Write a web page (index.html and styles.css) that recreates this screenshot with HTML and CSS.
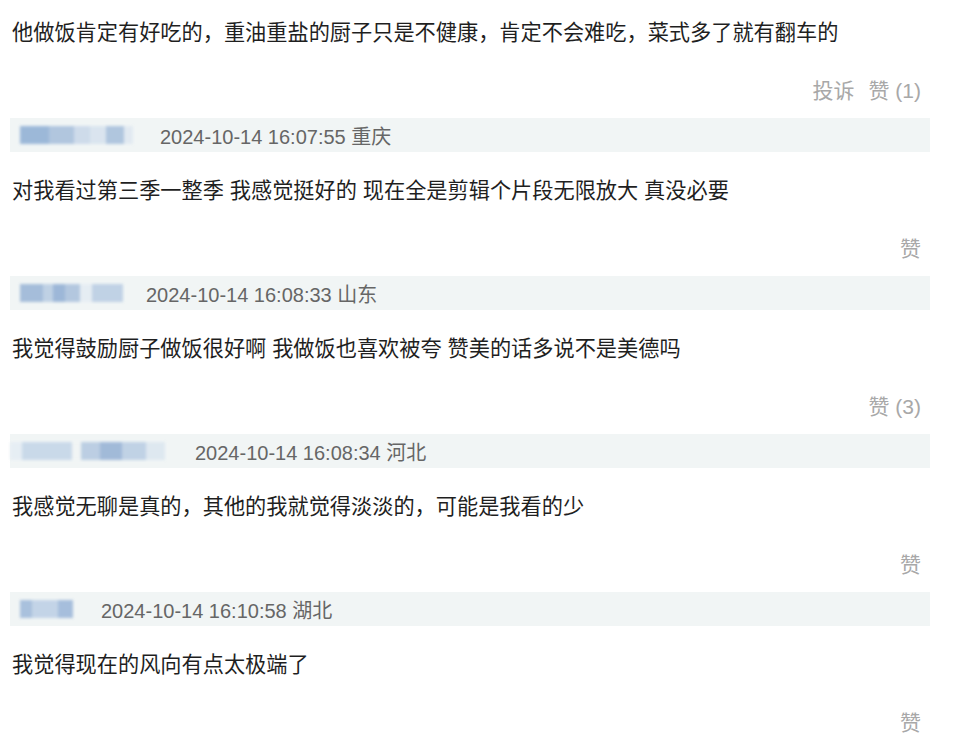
FILE: index.html
```html
<!DOCTYPE html>
<html lang="zh-CN">
<head>
  <meta charset="UTF-8">
  <meta name="viewport" content="width=device-width, initial-scale=1.0">
  <title>评论</title>
  <link rel="stylesheet" href="styles.css">
</head>
<body>
  <div class="comments">
    <div class="comment">
      <p class="text">他做饭肯定有好吃的，重油重盐的厨子只是不健康，肯定不会难吃，菜式多了就有翻车的</p>
      <div class="actions"><span class="report">投诉</span><span>赞 (1)</span></div>
    </div>

    <div class="comment">
      <div class="meta">
        <span class="name name-1"></span>
        <span class="time">2024-10-14 16:07:55 重庆</span>
      </div>
      <p class="text">对我看过第三季一整季 我感觉挺好的 现在全是剪辑个片段无限放大 真没必要</p>
      <div class="actions"><span>赞</span></div>
    </div>

    <div class="comment">
      <div class="meta">
        <span class="name name-2"></span>
        <span class="time">2024-10-14 16:08:33 山东</span>
      </div>
      <p class="text">我觉得鼓励厨子做饭很好啊 我做饭也喜欢被夸 赞美的话多说不是美德吗</p>
      <div class="actions"><span>赞 (3)</span></div>
    </div>

    <div class="comment">
      <div class="meta">
        <span class="name name-3"></span>
        <span class="time">2024-10-14 16:08:34 河北</span>
      </div>
      <p class="text">我感觉无聊是真的，其他的我就觉得淡淡的，可能是我看的少</p>
      <div class="actions"><span>赞</span></div>
    </div>

    <div class="comment">
      <div class="meta">
        <span class="name name-4"></span>
        <span class="time">2024-10-14 16:10:58 湖北</span>
      </div>
      <p class="text">我觉得现在的风向有点太极端了</p>
      <div class="actions"><span>赞</span></div>
    </div>
  </div>
</body>
</html>
```

FILE: styles.css
```css
body {
  margin: 0;
  background: #fff;
  font-family: "Liberation Sans", "Noto Sans CJK SC", sans-serif;
}

.comments {
  width: 920px;
  padding: 18px 10px 0;
}

.meta {
  display: flex;
  align-items: center;
  height: 34px;
  background-color: #f1f5f5; /* pale grey-green bar */
}

.name {
  display: block;
  height: 18px;
  filter: blur(1.6px);
  opacity: 0.85;
}

.name-1 {
  margin: 0 27px 0 10px;
  width: 113px;
  background: linear-gradient(90deg, #8eaed4 0 26%, #a6bedb 26% 48%, #c8d7e9 48% 62%, #d6e2ee 62% 76%, #a5bedb 76% 92%, #dfe8f1 92%);
}

.name-2 {
  margin: 0 23px 0 10px;
  width: 103px;
  background: linear-gradient(90deg, #98b4d6 0 22%, #b7cbe2 22% 32%, #8fadd3 32% 44%, #a9c0dc 44% 58%, #e4ecf3 58% 70%, #b8cce3 70% 100%);
}

.name-3 {
  margin: 0 30px 0 0;
  width: 155px;
  background: linear-gradient(90deg, #e5edf4 0 8%, #c3d5e8 8% 40%, #f1f5f5 40% 46%, #b3c8e0 46% 58%, #94b0d4 58% 72%, #b8cce3 72% 88%, #dbe6f0 88%);
}

.name-4 {
  margin: 0 28px 0 10px;
  width: 53px;
  background: linear-gradient(90deg, #9db8d9 0 22%, #bccfe5 22% 72%, #9ab5d8 72% 100%);
}

.time {
  font-size: 20px;
  color: #666;
}

.text {
  margin: 24px 0 0;
  padding-left: 2px;
  font-size: 21.2px;
  line-height: 30px;
  color: #1f1f1f;
}

.comment:first-child .text {
  margin-top: 0;
}

.actions {
  display: flex;
  justify-content: flex-end;
  gap: 14px;
  margin-top: 28px;
  margin-bottom: 12px;
  padding-right: 9px;
  font-size: 21px;
  line-height: 30px;
  color: #a8a8a8;
}
```
